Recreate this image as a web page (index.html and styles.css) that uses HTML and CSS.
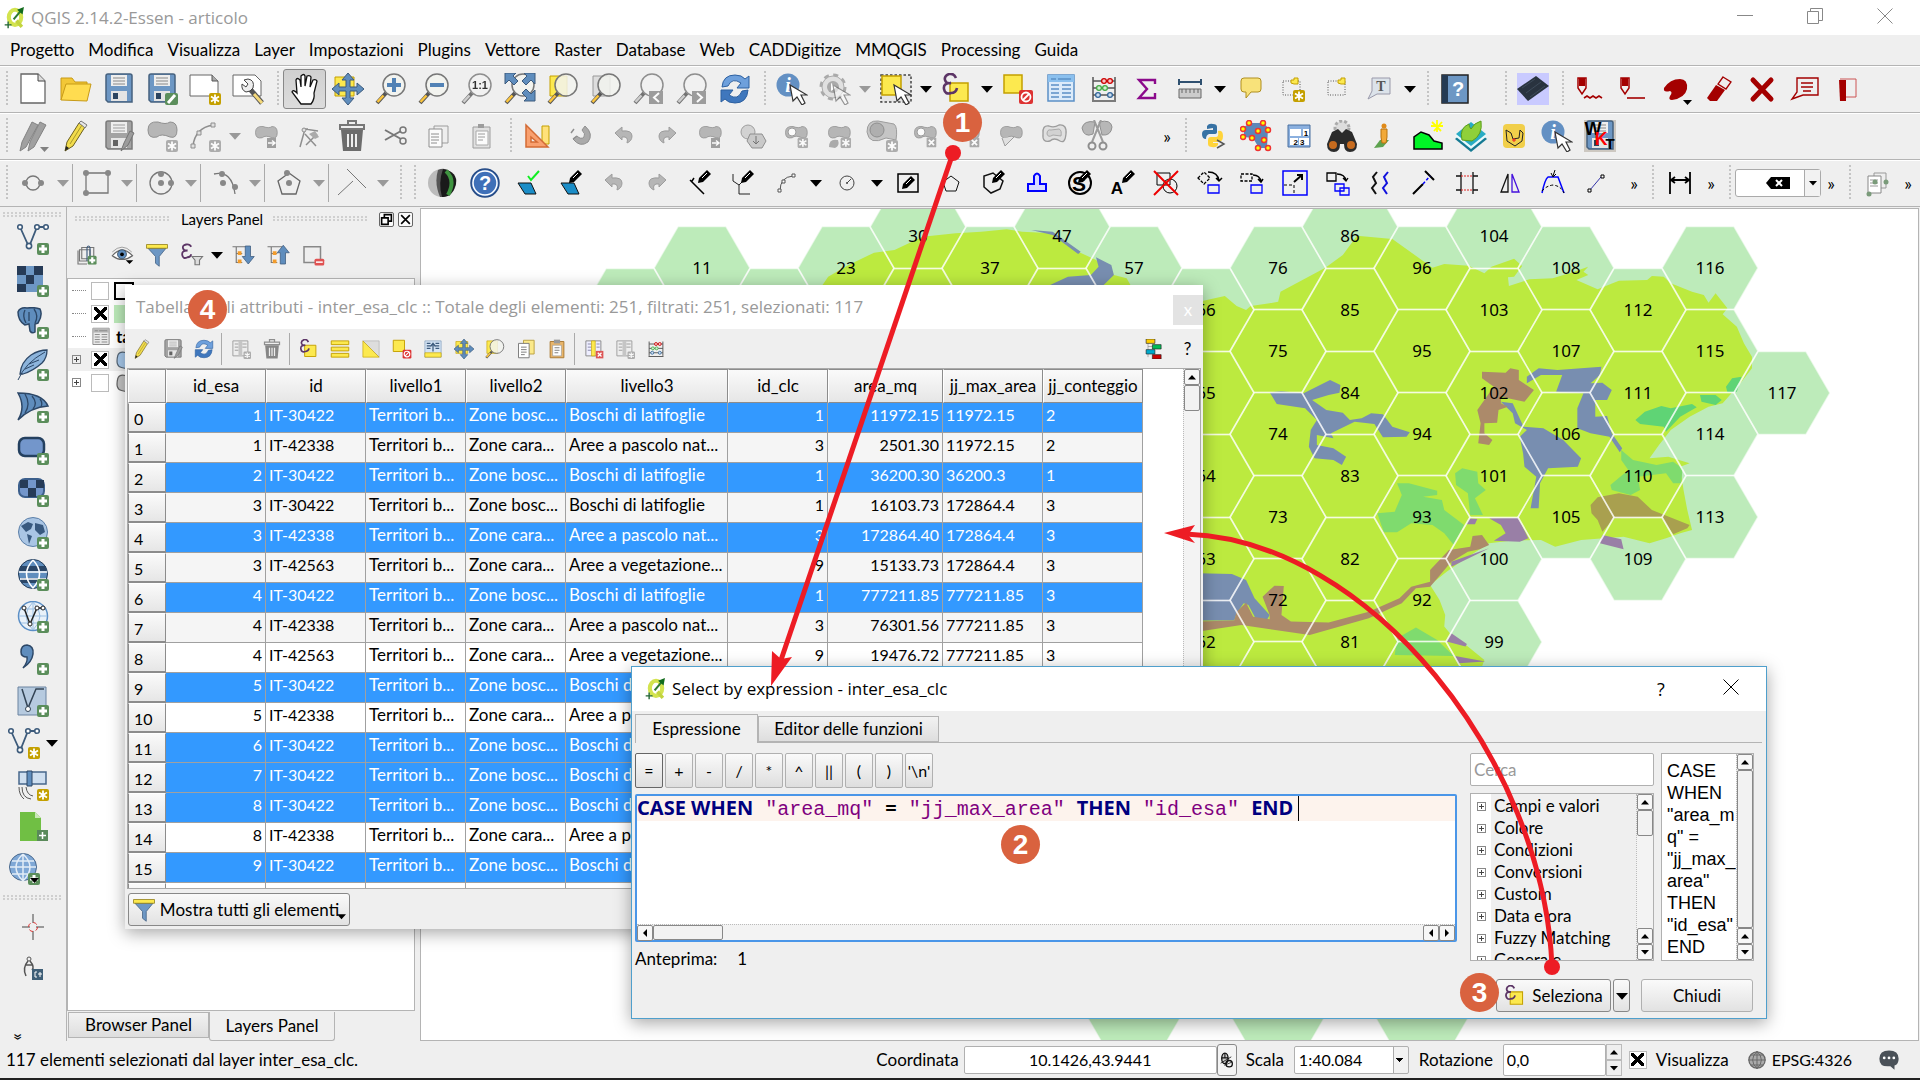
FILE: index.html
```html
<!DOCTYPE html>
<html lang="it">
<head>
  <meta charset="UTF-8" />
  <title>QGIS 2.14.2-Essen - articolo</title>
  <meta name="viewport" content="width=device-width, initial-scale=1" />
  <link rel="stylesheet" href="styles.css">
</head>
<body>

  <svg class="defs" aria-hidden="true">
    <!-- badges and shared parts -->
    <symbol id="b-plus" viewBox="0 0 32 32"><rect x="20" y="20" width="12" height="12" rx="2" fill="#5b8e5b"/><path d="M26 22v8M22 26h8" stroke="#fff" stroke-width="3"/></symbol>
    <symbol id="b-star" viewBox="0 0 32 32"><rect x="20" y="20" width="12" height="12" rx="2" fill="#c4a000"/><path d="M26 21.500v9M22 23.500l8 5M22 28.500l8-5" stroke="#fff" stroke-width="1.800"/></symbol>
    <symbol id="b-del" viewBox="0 0 32 32"><rect x="20" y="20" width="11" height="11" rx="1" fill="#999"/><path d="M22.500 22.500l6 6M28.500 22.500l-6 6" stroke="#fff" stroke-width="2"/></symbol>
    <symbol id="glass" viewBox="0 0 32 32"><path d="M2 30l9-10" stroke="#555" stroke-width="4"/><path d="M2.500 29l6-6.500" stroke="#fbc53d" stroke-width="2.500"/><circle cx="19" cy="12" r="11" fill="#f2f3ee" fill-opacity=".85" stroke="#777" stroke-width="1.500"/></symbol>
    <symbol id="cursor" viewBox="0 0 32 32"><path d="M14 12l3 16 4-4 5 8 3-2-4-8h6z" fill="#fff" stroke="#333" stroke-width="1.200"/></symbol>
    <symbol id="pen-s" viewBox="0 0 32 32"><path d="M14 16l1-5 8-8 4 4-8 8z" fill="#000"/><path d="M18 11l5-5" stroke="#fff" stroke-width="1"/></symbol>
    <symbol id="logo" viewBox="0 0 32 32"><ellipse cx="16" cy="15" rx="9" ry="11" fill="none" stroke="#d3e34f" stroke-width="6"/><path d="M18 20l8 9" stroke="#c3d43f" stroke-width="5"/><path d="M14 18L25 5" stroke="#2c7a2f" stroke-width="3"/><path d="M19 4l10-4-2 11z" fill="#116b1c"/><path d="M1 26h10M6 21v10" stroke="#263" stroke-width="2"/></symbol>

    <!-- project -->
    <symbol id="new" viewBox="0 0 32 32"><path d="M4 1h17l7 7v22H4z" fill="#fff" stroke="#666" stroke-width="1.300"/><path d="M21 1v7h7" fill="#ddd" stroke="#444"/></symbol>
    <symbol id="open" viewBox="0 0 32 32"><path d="M1 27V5h11l3 4h12v4" fill="#f2c737" stroke="#c79a17"/><path d="M1 27l5-16h25l-4 17z" fill="#ffdc50" stroke="#c79a17"/></symbol>
    <symbol id="save" viewBox="0 0 32 32"><path d="M3 3q0-2 2-2h22q2 0 2 2v26h-24l-2-2z" fill="#6d97c4" stroke="#45617f" stroke-width="1.500"/><path d="M8 2h16v11H8z" fill="#eee"/><path d="M10 5h12M10 8h12M10 11h12" stroke="#888"/><path d="M8 18h16v10H8z" fill="#e4e4e4"/><path d="M10 20h5v6h-5z" fill="#2b4460"/></symbol>
    <symbol id="saveas" viewBox="0 0 32 32"><use href="#save"/><rect x="19" y="20" width="13" height="12" rx="2" fill="#5b8e5b"/><path d="M22 30l7-8" stroke="#fff" stroke-width="3"/></symbol>
    <symbol id="compnew" viewBox="0 0 32 32"><path d="M1 2h22l6 6v15H1z" fill="#fff" stroke="#666"/><path d="M23 2v6h6" fill="#aaa" stroke="#555"/><use href="#b-star"/></symbol>
    <symbol id="comp" viewBox="0 0 32 32"><path d="M1 2h22l6 6v15H1z" fill="#fff" stroke="#666"/><path d="M18 16l12 14" stroke="#555" stroke-width="5"/><path d="M22 21l8 9" stroke="#f5d97b" stroke-width="3"/><path d="M12 7l4 4-2 3-4-3q-1 6 4 8l4-1 3-3q2-8-5-9z" fill="#eee" stroke="#444"/></symbol>
    <symbol id="hand" viewBox="0 0 32 32"><path d="M12 31q-6-8-9-12 1-3 5 1L7 7q1-3 4 0l1 7V3q3-3 4 0v10l2-10q3-1 4 1l-1 10 3-7q3-1 4 1l-3 12q1 6-3 11z" fill="#fff" stroke="#111" stroke-width="1.300"/></symbol>
    <symbol id="pan" viewBox="0 0 32 32"><path d="M3 4h19v19H3z" fill="#fce94f" stroke="#c4a000"/><path d="M16 0l6 7h-4v7h7v-4l7 6-7 6v-4h-7v7h4l-6 7-6-7h4v-7H7v4l-7-6 7-6v4h7V7h-4z" fill="#5f8dbd" stroke="#3c5a7c"/></symbol>
    <symbol id="zin" viewBox="0 0 32 32"><use href="#glass"/><path d="M19 5v14M12 12h14" stroke="#5282b5" stroke-width="4"/></symbol>
    <symbol id="zout" viewBox="0 0 32 32"><use href="#glass"/><path d="M12 12h14" stroke="#5282b5" stroke-width="4"/></symbol>
    <symbol id="z11" viewBox="0 0 32 32"><use href="#glass"/><text x="19" y="16" class="ic-b" font-size="11">1:1</text></symbol>
    <symbol id="zfull" viewBox="0 0 32 32"><use href="#glass"/><path d="M1 0h11l-3 3 5 5-4 4-5-5-4 4zM31 0H20l3 3-5 5 4 4 5-5 4 4zM31 28H20l3-3-5-5 4-4 5 5 4-4z" fill="#5f8dbd" stroke="#3c5a7c"/></symbol>
    <symbol id="zsel" viewBox="0 0 32 32"><path d="M3 3h17v20H3z" fill="#fce94f" stroke="#c4a000"/><use href="#glass"/></symbol>
    <symbol id="zlay" viewBox="0 0 32 32"><path d="M3 3h17v20H3z" fill="#ddd" stroke="#999"/><use href="#glass"/></symbol>
    <symbol id="zlast" viewBox="0 0 32 32"><use href="#glass"/><path d="M16 18h14v13H16z" fill="#888"/><path d="M26 20l-5 4.500 5 4.500" fill="none" stroke="#fff" stroke-width="2"/></symbol>
    <symbol id="znext" viewBox="0 0 32 32"><use href="#glass"/><path d="M16 18h14v13H16z" fill="#888"/><path d="M21 20l5 4.500-5 4.500" fill="none" stroke="#fff" stroke-width="2"/></symbol>
    <symbol id="refresh" viewBox="0 0 32 32"><path d="M3 14Q4 2 16 2q7 0 10 4l4-3v12H18l4-5q-9-6-13 3z" fill="#6ea0dc" stroke="#2d60a0"/><path d="M29 17Q28 30 16 30q-7 0-10-4l-4 3V17h12l-4 5q9 6 13-4z" fill="#3f77bd" stroke="#2d60a0"/></symbol>
    <symbol id="info" viewBox="0 0 32 32"><circle cx="12" cy="12" r="11.500" fill="#6390c3"/><text x="12" y="19" class="ic-i" font-size="20">i</text><use href="#cursor"/></symbol>
    <symbol id="gear" viewBox="0 0 32 32"><circle cx="14" cy="14" r="12" fill="none" stroke="#999" stroke-width="3" stroke-dasharray="5 4.400"/><circle cx="14" cy="14" r="11" fill="#ddd" stroke="#999"/><circle cx="14" cy="14" r="6" fill="#999"/><path d="M12 10l6 4-6 4z" fill="#fff"/><use href="#cursor" opacity=".6"/></symbol>
    <symbol id="select" viewBox="0 0 32 32"><path d="M1 2h30v27H1z" fill="#e6e6e6" stroke="#444" stroke-width="1.500" stroke-dasharray="2.500 2"/><path d="M2 3h19v19H2z" fill="#fce94f" stroke="#c4a000" stroke-width="1.500"/><use href="#cursor"/></symbol>
    <symbol id="eps" viewBox="0 0 32 32"><path d="M9 10h18v18H9z" fill="#fce94f" stroke="#c4a000" stroke-width="1.500"/><path d="M15 5Q13 0 8 1 3 3 4 7t6 3q-8 0-7 6t7 4q5 0 6-5" fill="none" stroke="#5c3566" stroke-width="2.600"/></symbol>
    <symbol id="desel" viewBox="0 0 32 32"><path d="M2 2h18v18H2z" fill="#fce94f" stroke="#c4a000" stroke-width="1.500"/><rect x="17" y="17" width="14" height="14" rx="2" fill="#d33"/><circle cx="24" cy="24" r="4.500" fill="none" stroke="#fff" stroke-width="1.800"/><path d="M21 27l6-6" stroke="#fff" stroke-width="1.800"/></symbol>
    <symbol id="table" viewBox="0 0 32 32"><path d="M3 2h26v26H3z" fill="#dcebfa" stroke="#5b90c6" stroke-width="1.500"/><path d="M3 2h26v7H3z" fill="#8bc0ee"/><path d="M6 6h5M13 6h13M6 12h8M17 12h9M6 16h8M17 16h9M6 20h8M17 20h9M6 24h8M17 24h9" stroke="#5b90c6" stroke-width="1.500"/></symbol>
    <symbol id="abacus" viewBox="0 0 32 32"><path d="M5 4v23M27 4v23M4 28h24M5 8h22M5 15h22M5 22h22" stroke="#555" stroke-width="1.500"/><g stroke-width="1.300"><g fill="#f9c7c7" stroke="#c00"><circle cx="16" cy="8" r="2.400"/><circle cx="22" cy="8" r="2.400"/></g><g fill="#cfefcf" stroke="#4a4"><circle cx="11" cy="15" r="2.400"/><circle cx="17" cy="15" r="2.400"/></g><g fill="#cde" stroke="#369"><circle cx="10" cy="22" r="2.400"/><circle cx="22" cy="22" r="2.400"/></g></g></symbol>
    <symbol id="sigma" viewBox="0 0 32 32"><path d="M24 11V7H8l8 9-8 9h16v-5" fill="none" stroke="#8b0a8b" stroke-width="2.400"/></symbol>
    <symbol id="ruler" viewBox="0 0 32 32"><path d="M5 9h22M5 6v6M27 6v6" stroke="#2f5070" stroke-width="2"/><path d="M5 16h22v9H5z" fill="#ccc" stroke="#666"/><path d="M8 16v4M12 16v4M16 16v4M20 16v4M24 16v4" stroke="#666"/></symbol>
    <symbol id="bubble" viewBox="0 0 32 32"><path d="M9 5h14q3 0 3 3v8q0 3-3 3h-7l-5 6v-6H9q-3 0-3-3V8q0-3 3-3z" fill="#f8e27a" stroke="#b08f1f"/></symbol>
    <symbol id="bmark" viewBox="0 0 32 32"><path d="M7 8h17v14H7z" fill="none" stroke="#555" stroke-dasharray="1 1.500"/><path d="M17 10V7h3V5h4v6h-4z" fill="#fce94f" stroke="#c4a000"/></symbol>
    <symbol id="bmnew" viewBox="0 0 32 32"><path d="M5 8h17v14H5z" fill="none" stroke="#555" stroke-dasharray="1 1.500"/><path d="M13 10V7h3V5h4v6h-4z" fill="#fce94f" stroke="#c4a000"/><g transform="translate(-5 -3)"><use href="#b-star"/></g></symbol>
    <symbol id="tnote" viewBox="0 0 32 32"><path d="M8 5h18v16H13l-9 5 4-8z" fill="#dce3ea" stroke="#99a"/><text x="17" y="18" class="ic-t" font-size="14">T</text></symbol>
    <symbol id="book" viewBox="0 0 32 32"><path d="M3 2h26v28H3z" fill="#6d97c4" stroke="#222" stroke-width="1.500"/><path d="M3 2h6v28H3z" fill="#253a52"/><text x="19" y="23" font-size="20" class="ic-w">?</text></symbol>
    <symbol id="chip" viewBox="0 0 32 32"><path d="M0 0h32v32H0z" fill="#c9caff"/><path d="M0 16L19 3l13 10-21 15z" fill="#29333f"/><path d="M5 15l13-9M9 20l15-11M13 24l15-11" stroke="#3e4b5a"/></symbol>
    <symbol id="rpen1" viewBox="0 0 32 32"><path d="M4 5h8v10l-4 6-4-6z" fill="none" stroke="#a40000" stroke-width="1.500"/><path d="M5 5h6v8H5z" fill="#a40000"/><path d="M10 25l3-2 3 2 3-2 3 2 3-2 3 2" fill="none" stroke="#a40000" stroke-width="1.600"/></symbol>
    <symbol id="rpen2" viewBox="0 0 32 32"><path d="M4 5h8v10l-4 6-4-6z" fill="none" stroke="#a40000" stroke-width="1.500"/><path d="M5 5h6v8H5z" fill="#a40000"/><path d="M10 25h18" stroke="#a40000" stroke-width="1.600"/></symbol>
    <symbol id="palette" viewBox="0 0 32 32"><path d="M4 15Q10 6 20 6q8 0 7 10-2 9-15 11-4 0-2-4 3-4 0-5-7 2-6-3z" fill="#a40000"/><path d="M23 27h9l-4.500 5z"/></symbol>
    <symbol id="eraser" viewBox="0 0 32 32"><path d="M20 4l8 5-5 7-8-5z" fill="none" stroke="#a40000" stroke-width="1.300"/><path d="M13 12l9 5-8 11H7l-3-3z" fill="#a40000"/></symbol>
    <symbol id="rx" viewBox="0 0 32 32"><path d="M7 7l18 19M25 7L7 26" stroke="#a40000" stroke-width="5" stroke-linecap="round"/></symbol>
    <symbol id="rnote" viewBox="0 0 32 32"><path d="M8 5h21v17H14L3 26l5-7zM12 10h12M12 14h12M14 18h8" fill="none" stroke="#a40000" stroke-width="1.400"/></symbol>
    <symbol id="rdoc" viewBox="0 0 32 32"><path d="M8 6h16v18H14" fill="none" stroke="#c55"/><path d="M7 7h7v21H8z" fill="#a40000"/></symbol>

    <!-- digitizing -->
    <symbol id="pencil" viewBox="0 0 32 32"><path d="M5 31l2-9L19 3l6 4-12 19z" fill="#f2dc4c" stroke="#6b5f20"/><path d="M19 3l2-2 6 4-2 3z" fill="#e6e6e6" stroke="#777"/><path d="M5 31l1-5 3 2z" fill="#222"/><path d="M10 24L22 5" stroke="#a8982d"/></symbol>
    <symbol id="pencils" viewBox="0 0 32 32"><path d="M3 31l2-9L15 2l6 3-12 22zM11 31l2-9L23 2l6 3-12 22z" fill="#8d8d8d" stroke="#666"/><path d="M23 27h9l-4.500 5z" fill="#666"/></symbol>
    <symbol id="savep" viewBox="0 0 32 32"><use href="#save"/><path d="M18 31l3-8 6-12 4 2-6 12z" fill="#888" stroke="#555"/></symbol>
    <symbol id="blob" viewBox="0 0 32 32"><path d="M2 10q0-9 10-8 8 3 12 0 7 0 7 8 0 9-7 7-9-4-13 0-9 2-9-7z" fill="#a9a9a9" stroke="#777"/></symbol>
    <symbol id="addpoly" viewBox="0 0 32 32"><use href="#blob"/><use href="#b-star"/></symbol>
    <symbol id="addcurve" viewBox="0 0 32 32"><path d="M4 26Q6 8 24 5" fill="none" stroke="#777" stroke-width="1.500"/><path d="M2 24h4v4H2zM8 11h4v4H8zM22 3h4v4h-4z" fill="#ddd" stroke="#777"/><use href="#b-star"/></symbol>
    <symbol id="part" viewBox="0 0 32 32"><g transform="translate(4 5) scale(.75)"><use href="#blob" width="32" height="32"/></g><path d="M6 27q0-9 9-7 2 6-3 8z" fill="#999"/><g transform="translate(0 0) scale(.88)"><use href="#b-star" width="32" height="32"/></g></symbol>
    <symbol id="ring" viewBox="0 0 32 32"><g transform="translate(4 5) scale(.75)"><use href="#blob" width="32" height="32"/></g><circle cx="12" cy="12" r="4" fill="#fff" stroke="#888"/><g transform="translate(0 0) scale(.88)"><use href="#b-star" width="32" height="32"/></g></symbol>
    <symbol id="ringdel" viewBox="0 0 32 32"><g transform="translate(4 5) scale(.75)"><use href="#blob" width="32" height="32"/></g><circle cx="12" cy="12" r="4" fill="#fff" stroke="#888"/><g transform="translate(0 0) scale(.88)"><use href="#b-del" width="32" height="32"/></g></symbol>
    <symbol id="fillring" viewBox="0 0 32 32"><path d="M1 12Q1 0 12 1l16 3q4 3 2 16l-10-2Q3 26 1 12z" fill="#bbb" stroke="#888"/><circle cx="11" cy="10" r="7" fill="#a0a0a0" stroke="#777"/><use href="#b-star"/></symbol>
    <symbol id="movef" viewBox="0 0 32 32"><g transform="translate(4 5) scale(.75)"><use href="#blob" width="32" height="32"/></g><path d="M17 18h9v10h-9z" fill="#8a8a8a"/><path d="M18 23h6M22 20.500l3 2.500-3 2.500" fill="none" stroke="#fff" stroke-width="1.500"/></symbol>
    <symbol id="simpl" viewBox="0 0 32 32"><circle cx="11" cy="12" r="7" fill="#ccc" stroke="#888"/><path d="M13 14h12l4 7-4 7H15l-5-7z" fill="#c0c0c0" stroke="#777"/><path d="M19 16v8l-3-3M19 24l3-3" fill="none" stroke="#555"/></symbol>
    <symbol id="reshape" viewBox="0 0 32 32"><g transform="translate(4 5) scale(.75)"><use href="#blob" width="32" height="32"/></g><path d="M7 18l3 8 9-9" fill="#ddd" stroke="#888"/></symbol>
    <symbol id="offset" viewBox="0 0 32 32"><path d="M5 14q-1-9 6-8 5 2 10-1 8-1 7 9-1 10-6 7-6-4-10 0-8 2-7-7z" fill="#ddd" stroke="#888" stroke-width="1.300"/><path d="M9 14q0-5 4-4l8-1q3 1 2 7l-8-1q-5 3-6-1z" fill="#ccc" stroke="#999"/></symbol>
    <symbol id="split" viewBox="0 0 32 32"><path d="M1 8q2-8 13-6l-2 12Q3 18 1 8zM18 2q12-3 13 5-1 9-10 8z" fill="#aaa" stroke="#777"/><path d="M11 22l9-22M22 22L13 0" stroke="#888" stroke-width="2"/><circle cx="11" cy="26" r="3.500" fill="none" stroke="#777" stroke-width="2"/><circle cx="22" cy="26" r="3.500" fill="none" stroke="#777" stroke-width="2"/></symbol>
    <symbol id="node" viewBox="0 0 32 32"><path d="M7 27l5-18 13 2M10 9h5M12 14l11 12M24 14L13 25" fill="none" stroke="#777" stroke-width="1.500"/><circle cx="11" cy="10" r="2" fill="#ddd" stroke="#777"/><path d="M16 14l6-3 4 6-4 2z" fill="#999"/></symbol>
    <symbol id="trash" viewBox="0 0 32 32"><path d="M5 10h22l-2 21H7z" fill="#6c6c6c"/><path d="M4 5h24v4H4zM12 5V1h8v4" fill="none" stroke="#777" stroke-width="2"/><path d="M12 14v13M16 14v13M20 14v13" stroke="#eee" stroke-width="2"/></symbol>
    <symbol id="cut" viewBox="0 0 32 32"><path d="M6 10l16 9M6 20l16-9" stroke="#777" stroke-width="2"/><circle cx="24" cy="21" r="3" fill="none" stroke="#777" stroke-width="1.500"/><circle cx="24" cy="10" r="3" fill="none" stroke="#777" stroke-width="1.500"/></symbol>
    <symbol id="copy" viewBox="0 0 32 32"><path d="M12 6h14v17H12z" fill="#eee" stroke="#888"/><path d="M7 9h13v18H7z" fill="#fff" stroke="#777"/><path d="M9 14h8M9 17h8M9 20h8M9 23h6" stroke="#777"/></symbol>
    <symbol id="paste" viewBox="0 0 32 32"><path d="M8 7h17v21H8z" fill="#ddd" stroke="#888"/><path d="M13 4h6v4h-6z" fill="#888"/><path d="M11 11h12v14H11z" fill="#fff" stroke="#999"/><path d="M13 14h7M13 17h7M13 20h5" stroke="#888"/></symbol>
    <symbol id="tri" viewBox="0 0 32 32"><path d="M20 6h7v18h-7z" fill="#ffe27a" stroke="#c4a000"/><path d="M4 5v22h22zM9 17v5h6z" fill="#f9a06f" fill-rule="evenodd" stroke="#d36b35" stroke-width="1.500"/></symbol>
    <symbol id="magnet" viewBox="0 0 32 32"><path d="M20 6q9 8 3 16-8 6-15-3l4-3q4 4 7 1 2-3-2-7z" fill="#999" stroke="#777"/><path d="M6 13l3-4M8 19l4-3" stroke="#777" stroke-width="1.500"/></symbol>
    <symbol id="undo" viewBox="0 0 32 32"><path d="M7 13l7-6v4q10-1 10 5 0 5-5 7 2-7-5-6v3z" fill="#a8a8a8" stroke="#888"/></symbol>
    <symbol id="redo" viewBox="0 0 32 32"><path d="M25 13l-7-6v4q-10-1-10 5 0 5 5 7-2-7 5-6v3z" fill="#a8a8a8" stroke="#888"/></symbol>

    <!-- plugins -->
    <symbol id="python" viewBox="0 0 32 32"><path d="M10 9V6q2-3 6-2 4 0 4 3v5q0 2-3 2h-5q-3 1-3 5-4 0-4-5 0-4 4-4h7V8z" fill="#3772a4"/><path d="M21 11q5-1 5 5t-5 6h-5v1h5v2q-2 3-6 2-4 0-4-3v-4q0-3 3-3h5q3 0 2-6z" fill="#ffd43b"/><path d="M20 20l7 4-7 4" fill="none" stroke="#555" stroke-width="1.500"/></symbol>
    <symbol id="nodes" viewBox="0 0 32 32"><path d="M4 7l6-4h14l4 5-1 20H19l-6-10-9-1z" fill="#5b87b8"/><g fill="#ff0" stroke="#e33" stroke-width="1.500"><circle cx="9" cy="3" r="2.500"/><circle cx="23" cy="3" r="2.500"/><circle cx="3" cy="9" r="2.500"/><circle cx="28" cy="10" r="2.500"/><circle cx="18" cy="11" r="2.500"/><circle cx="3" cy="17" r="2.500"/><circle cx="12" cy="18" r="2.500"/><circle cx="24" cy="20" r="2.500"/><circle cx="18" cy="28" r="2.500"/><circle cx="28" cy="28" r="2.500"/></g></symbol>
    <symbol id="calc" viewBox="0 0 32 32"><path d="M5 5h22v22H5z" fill="#8bb0df" stroke="#4a70a0"/><path d="M7 9h11v7H7zM20 9h6v7h-6zM7 18h8v7H7zM16 18h10v7H16z" fill="#fff"/><text x="23" y="16" class="ic-b" font-size="8">1</text><text x="16" y="25" class="ic-b" font-size="8">2 3</text></symbol>
    <symbol id="bino" viewBox="0 0 32 32"><circle cx="16" cy="8" r="7" fill="#ddd" stroke="#aaa" stroke-width="3" stroke-dasharray="3 2"/><path d="M6 12l6-3 4 4 4-4 6 3 5 12q0 8-7 8-6 0-6-8h-4q0 8-6 8-7 0-7-8z" fill="#2b2b2b"/><circle cx="7" cy="25" r="4" fill="#c76b1e"/><circle cx="25" cy="25" r="4" fill="#c76b1e"/></symbol>
    <symbol id="street" viewBox="0 0 32 32"><path d="M5 28l6-8h9l-6 7z" fill="#5da24e"/><circle cx="15" cy="6" r="2.500" fill="#e08a18"/><path d="M12 9h6v8l-1 6h-4l-1-6z" fill="#f2a93a" stroke="#b9720f"/></symbol>
    <symbol id="profile" viewBox="0 0 32 32"><path d="M2 29V17l7-5 8 3 5 6 8 2v6z" fill="#00f526" stroke="#000" stroke-width="1.500"/><path d="M20 2l9 9M30 2l-8 9M25 0v12M19 6h12" stroke="#ff0" stroke-width="1.800"/></symbol>
    <symbol id="leaf" viewBox="0 0 32 32"><path d="M0 19L16 6l16 13-16 13z" fill="#157a93"/><path d="M0 16L16 3l16 13-16 13z" fill="#e9fafc"/><path d="M1 14L16 2l15 12-15 12z" fill="#28acc4"/><path d="M7 20Q4 8 14 4q0 3 2 5 3-6 10-8 2 14-9 20z" fill="#8fd039" stroke="#5b9e1c"/></symbol>
    <symbol id="fox" viewBox="0 0 32 32"><rect x="5" y="4" width="22" height="24" rx="4" fill="#f1cf4a"/><path d="M8 10l5 3 2 6 6-1 1-8 3 3-1 8-7 5-8-5z" fill="none" stroke="#222"/><path d="M16 18v4M14 20h4" stroke="#e22"/></symbol>
    <symbol id="wkt" viewBox="0 0 32 32"><path d="M0 0h32v32H0z" fill="#cdc8c1"/><use href="#save"/><text x="9" y="15" class="ic-b" font-size="18">W</text><text x="17" y="25" class="ic-b" font-size="18" fill="#f00">K</text><text x="26" y="29" class="ic-b" font-size="15">T</text></symbol>

    <!-- CAD -->
    <symbol id="sh1" viewBox="0 0 32 32"><circle cx="16" cy="16" r="7" fill="none" stroke="#777" stroke-width="1.300"/><circle cx="8" cy="16" r="3" fill="#888"/><circle cx="24" cy="16" r="3" fill="#888"/></symbol>
    <symbol id="sh2" viewBox="0 0 32 32"><path d="M5 6h22v20H5z" fill="none" stroke="#777" stroke-width="1.300"/><circle cx="5" cy="6" r="3" fill="#888"/><circle cx="27" cy="6" r="3" fill="#888"/><circle cx="5" cy="26" r="3" fill="#888"/></symbol>
    <symbol id="sh3" viewBox="0 0 32 32"><circle cx="16" cy="16" r="11" fill="none" stroke="#777" stroke-width="1.300"/><circle cx="16" cy="7" r="3" fill="#888"/><circle cx="16" cy="16" r="3" fill="#888"/><circle cx="26" cy="16" r="3" fill="#888"/></symbol>
    <symbol id="sh4" viewBox="0 0 32 32"><path d="M5 7q18-4 21 20" fill="none" stroke="#777" stroke-width="1.300"/><circle cx="13" cy="7" r="3" fill="#888"/><circle cx="14" cy="16" r="3" fill="#888"/><circle cx="26" cy="20" r="3" fill="#888"/></symbol>
    <symbol id="sh5" viewBox="0 0 32 32"><path d="M16 6l11 8-4 13H9L5 14z" fill="none" stroke="#666" stroke-width="1.300"/><circle cx="14" cy="6" r="3" fill="#888"/><circle cx="16" cy="16" r="3" fill="#888"/></symbol>
    <symbol id="sh6" viewBox="0 0 32 32"><path d="M10 2l19 19M16 14L1 28" fill="none" stroke="#777"/></symbol>
    <symbol id="globe" viewBox="0 0 32 32"><circle cx="16" cy="16" r="14" fill="#bbb"/><path d="M12 3q12-5 18 12-2 16-16 15-6-14-2-27z" fill="#555"/><path d="M17 2q15 3 13 15-4 14-14 13-4-14 1-28z" fill="#1a1a1a"/><path d="M20 4q10 9 2 24" fill="none" stroke="#3f9440" stroke-width="4"/></symbol>
    <symbol id="help" viewBox="0 0 32 32"><circle cx="16" cy="16" r="14" fill="#3f70b8" stroke="#274c86" stroke-width="1.500"/><circle cx="16" cy="16" r="12" fill="none" stroke="#fff" stroke-width="1.500"/><text x="16" y="23" class="ic-w" font-size="20">?</text></symbol>
    <symbol id="bcheck" viewBox="0 0 32 32"><path d="M6 16h13l5 11H13z" fill="#1b8dc7" stroke="#111"/><path d="M16 9l3 4 8-9" fill="none" stroke="#1e2" stroke-width="2"/></symbol>
    <symbol id="bpen" viewBox="0 0 32 32"><path d="M6 16h13l5 11H13z" fill="#1b8dc7" stroke="#111"/><use href="#pen-s"/></symbol>
    <symbol id="c1" viewBox="0 0 32 32"><path d="M6 13l14 14M8 14l2-3" stroke="#000" stroke-width="1.500"/><use href="#pen-s"/></symbol>
    <symbol id="c2" viewBox="0 0 32 32"><path d="M6 7v7l6 4v9h11M12 18l6-6" fill="none" stroke="#222"/><use href="#pen-s"/></symbol>
    <symbol id="arc" viewBox="0 0 32 32"><path d="M10 24q0-14 13-15" fill="none" stroke="#555"/><path d="M8 22h3v3H8zM12 13h3v3h-3zM22 7h3v3h-3z" fill="#fff" stroke="#555"/></symbol>
    <symbol id="circ" viewBox="0 0 32 32"><circle cx="16" cy="16" r="7" fill="none" stroke="#444"/><path d="M16 16l4-4" stroke="#444"/><circle cx="16" cy="16" r="1" fill="#444"/></symbol>
    <symbol id="boxpen" viewBox="0 0 32 32"><path d="M6 7h20v18H6z" fill="none" stroke="#000" stroke-width="1.500"/><g transform="translate(-4 6)"><use href="#pen-s"/></g></symbol>
    <symbol id="pent" viewBox="0 0 32 32"><path d="M16 9l8 6-3 9H11l-3-9z" fill="none" stroke="#111"/></symbol>
    <symbol id="polypen" viewBox="0 0 32 32"><path d="M15 6l10 8-3 8-9 4-7-6V9z" fill="none" stroke="#111" stroke-width="1.500"/><use href="#pen-s"/></symbol>
    <symbol id="stamp" viewBox="0 0 32 32"><path d="M13 17V9q3-5 6 0v8h6v7H7v-7z" fill="#d9dcff" stroke="#00f" stroke-width="2"/></symbol>
    <symbol id="cs" viewBox="0 0 32 32"><circle cx="16" cy="16" r="11" fill="none" stroke="#000" stroke-width="2"/><text x="15" y="24" class="ic-b" font-size="21">S</text><use href="#pen-s"/></symbol>
    <symbol id="ca" viewBox="0 0 32 32"><text x="10" y="27" class="ic-b" font-size="17">A</text><g transform="translate(1 0)"><use href="#pen-s"/></g></symbol>
    <symbol id="delx" viewBox="0 0 32 32"><path d="M7 6h13v12H7z" fill="none" stroke="#000"/><circle cx="20" cy="19" r="7" fill="none" stroke="#000"/><path d="M4 4l24 24M28 4L4 28" stroke="#e00" stroke-width="2"/></symbol>
    <symbol id="rot2" viewBox="0 0 32 32"><path d="M5 11l6-6 6 6-6 6z" fill="none" stroke="#000" stroke-width="1.300" stroke-dasharray="3 1.500"/><path d="M15 5q10 0 11 9m-3-3l3 3 3-3" fill="none" stroke="#000" stroke-width="1.500"/><path d="M15 18h11v8H15z" fill="none" stroke="#00f" stroke-width="1.300"/></symbol>
    <symbol id="mov2" viewBox="0 0 32 32"><path d="M5 7h11v7H5z" fill="none" stroke="#000" stroke-width="1.300" stroke-dasharray="3 1.500"/><path d="M17 8q7 0 8 7m-3-3l3 3 2-3" fill="none" stroke="#000" stroke-width="1.500"/><path d="M15 18h11v8H15z" fill="none" stroke="#00f" stroke-width="1.300"/></symbol>
    <symbol id="scale" viewBox="0 0 32 32"><path d="M4 4h24v24H4z" fill="none" stroke="#00f" stroke-width="1.500"/><path d="M5 18h10v9" fill="none" stroke="#000" stroke-dasharray="3 2"/><path d="M15 15l8-7m-5 0h5v5" fill="none" stroke="#000" stroke-width="2"/></symbol>
    <symbol id="copy2" viewBox="0 0 32 32"><path d="M5 6h9v8H5z" fill="none" stroke="#000" stroke-width="1.300"/><path d="M15 7q8 0 9 7m-3-3l3 3 2-3" fill="none" stroke="#000" stroke-width="1.300"/><path d="M13 17h9v7h-9zM18 21h9v7h-9z" fill="#efefef" stroke="#00f" stroke-width="1.300"/></symbol>
    <symbol id="par" viewBox="0 0 32 32"><path d="M12 5l-4 5 3 6-4 5 4 6" fill="none" stroke="#111" stroke-width="2"/><path d="M23 5l-4 5 3 6-4 5 4 6" fill="none" stroke="#11d" stroke-width="2"/></symbol>
    <symbol id="perp" viewBox="0 0 32 32"><path d="M5 27l10-10M17 4l9 9" stroke="#000" stroke-width="2"/><path d="M15 17l7-8" stroke="#00f" stroke-width="1.500" stroke-dasharray="3 2"/></symbol>
    <symbol id="grid" viewBox="0 0 32 32"><path d="M10 5v22M22 5v22M5 9h5M22 9h5M5 23h5M22 23h5" stroke="#111" stroke-width="1.300"/><path d="M10 9h12M10 23h12" stroke="#d22" stroke-dasharray="2 1"/></symbol>
    <symbol id="mirror" viewBox="0 0 32 32"><path d="M14 7v18H7z" fill="none" stroke="#111" stroke-width="1.300"/><path d="M18 7v18h7z" fill="none" stroke="#41d" stroke-width="1.300"/></symbol>
    <symbol id="trap" viewBox="0 0 32 32"><path d="M5 26q3-14 6-16h10l6 16" fill="none" stroke="#00f" stroke-width="1.500"/><path d="M5 24q4-5 11-6 8 1 11 8" fill="none" stroke="#000" stroke-dasharray="3 2"/><path d="M18 3l-2 6m-2-3l2 4 3-3" fill="none" stroke="#000"/></symbol>
    <symbol id="seg" viewBox="0 0 32 32"><path d="M10 23L21 10" stroke="#33a"/><path d="M8 22h3v3H8zM21 8h3v3h-3z" fill="#fff" stroke="#000"/></symbol>
    <symbol id="dim" viewBox="0 0 32 32"><path d="M6 5v22M26 5v22M7 13h18M11 10l-4 3 4 3M21 10l4 3-4 3" fill="none" stroke="#000" stroke-width="1.800"/></symbol>
    <symbol id="docs" viewBox="0 0 32 32"><path d="M13 6h12v15H13z" fill="#eee" stroke="#999"/><path d="M7 9h13v17H7z" fill="#fff" stroke="#888"/><path d="M9 13h8M9 16h8M9 19h8" stroke="#999"/><g fill="#7a9b7a"><circle cx="14" cy="15" r="2.500"/><circle cx="25" cy="15" r="2.500"/><circle cx="8" cy="27" r="2.500"/></g></symbol>

    <!-- add layer -->
    <symbol id="vecline" viewBox="0 0 32 32"><path d="M3 4l9 20 8-20h9" fill="none" stroke="#3d5b7b" stroke-width="1.800"/><g fill="#fff" stroke="#3d5b7b" stroke-width="1.600"><circle cx="3" cy="4" r="2.300"/><circle cx="12" cy="23" r="2.600"/><circle cx="20" cy="4" r="2.300"/><circle cx="29" cy="4" r="2.300"/></g></symbol>
    <symbol id="vec" viewBox="0 0 32 32"><use href="#vecline"/><use href="#b-plus"/></symbol>
    <symbol id="newvec" viewBox="0 0 32 32"><use href="#vecline"/><use href="#b-star"/></symbol>
    <symbol id="raster" viewBox="0 0 32 32"><path d="M0 1h26v26H0z" fill="#6d97c4"/><path d="M0 1h9v9H0zM17 1h9v9h-9zM9 10h8v9H9zM0 19h9v8H0z" fill="#263b57"/><use href="#b-plus"/></symbol>
    <symbol id="pg" viewBox="0 0 32 32"><path d="M1 5Q3 0 10 1q8-1 13 1 3 6-2 14l-3 1v8q-3 2-5-1l-1-7-4 1Q1 14 1 5z" fill="#5f8dbd" stroke="#2c4767" stroke-width="1.500"/><path d="M8 3q-3 6 1 13M17 2q5 7 1 14M12 5v9" fill="none" stroke="#2c4767" stroke-width="1.300"/><use href="#b-plus"/></symbol>
    <symbol id="feather" viewBox="0 0 32 32"><path d="M3 25Q4 13 14 6q8-5 16-5 0 8-5 13Q16 22 6 25z" fill="#8cb4dc" stroke="#2c4767" stroke-width="1.300"/><path d="M1 31Q8 14 28 3M8 20l9-4M12 15l10-4" fill="none" stroke="#2c4767"/><use href="#b-plus"/></symbol>
    <symbol id="sail" viewBox="0 0 32 32"><path d="M1 2q24 0 30 13Q14 16 1 29q8-13 0-27z" fill="#5f8dbd" stroke="#2c4767" stroke-width="1.500"/><path d="M8 3q6 10 0 19M15 5q6 7 1 13M23 8q3 4 1 8" fill="none" stroke="#2c4767" stroke-width="1.300"/><use href="#b-plus"/></symbol>
    <symbol id="db1" viewBox="0 0 32 32"><rect x="2" y="5" width="25" height="18" rx="6" fill="#7396cb" stroke="#24405f" stroke-width="2.500"/><use href="#b-plus"/></symbol>
    <symbol id="db2" viewBox="0 0 32 32"><rect x="2" y="4" width="25" height="18" rx="6" fill="#7396cb" stroke="#3c5f8c" stroke-width="2"/><path d="M3 5h8v8H3zM19 5h8v8h-8zM11 13h8v9h-8z" fill="#263b57"/><use href="#b-plus"/></symbol>
    <symbol id="wms" viewBox="0 0 32 32"><circle cx="16" cy="15" r="14.500" fill="#a9c5e4" stroke="#5b7fa8"/><path d="M4 9l7-4 5 2-2 5-5 3zM18 6l8 2 2 7-5 3-5-5zM10 17l5 2-3 8z" fill="#38597f"/><use href="#b-plus"/></symbol>
    <symbol id="wcs" viewBox="0 0 32 32"><circle cx="16" cy="15" r="14.500" fill="#5f8dbd" stroke="#203a58"/><path d="M3 7h26v5H3zM4 19h24v5H4z" fill="#2b4768"/><path d="M16 1q-13 14 0 28 13-14 0-28M2 13h28M3 20h26" fill="none" stroke="#fff" stroke-width="1.500"/><use href="#b-plus"/></symbol>
    <symbol id="wfs" viewBox="0 0 32 32"><circle cx="16" cy="15" r="14.500" fill="#e9f1f9" stroke="#5b8fc6" stroke-width="1.500"/><path d="M16 1v28M2 15h28M4 8h24M4 22h24M16 1q-14 14 0 28 14-14 0-28" fill="none" stroke="#9bbfe2"/><path d="M7 7l6 16 7-16h5" fill="none" stroke="#222" stroke-width="1.500"/><g fill="#fff" stroke="#222"><circle cx="7" cy="7" r="2"/><circle cx="13" cy="23" r="2"/><circle cx="20" cy="7" r="2"/><circle cx="26" cy="7" r="2"/></g><use href="#b-plus"/></symbol>
    <symbol id="comma" viewBox="0 0 32 32"><path d="M4 9q0-7 6-7 7 1 6 9Q15 19 6 25q5-6 4-11-6 0-6-5z" fill="#5f8dbd" stroke="#2c4767" stroke-width="1.500"/><use href="#b-plus"/></symbol>
    <symbol id="virt" viewBox="0 0 32 32"><path d="M1 2h28v28H1z" fill="#b6cadf" stroke="#6a83a0"/><path d="M5 4l6 19 8-19h8" fill="none" stroke="#345" stroke-width="1.500"/><circle cx="11" cy="24" r="2.500" fill="#fff" stroke="#345"/><use href="#b-plus"/></symbol>
    <symbol id="gps" viewBox="0 0 32 32"><path d="M2 3h27v12H2z" fill="#cfdff0" stroke="#48688c" stroke-width="1.500"/><path d="M10 2h5v15h-5z" fill="#5f8dbd" stroke="#2c4767"/><path d="M9 18q1 8 7 9M5 18q0 11 9 12M2 18q0 8 5 12" fill="none" stroke="#555"/><use href="#b-star"/></symbol>
    <symbol id="green" viewBox="0 0 32 32"><path d="M3 1h15l6 6v23H3z" fill="#70bf44"/><path d="M18 1v6h6z" fill="#c9e8b7"/><path d="M20 19h11v11H20z" fill="#5a8a5b"/><path d="M25.500 21v7M22 24.500h7" stroke="#fff" stroke-width="1.500"/></symbol>
    <symbol id="gl2" viewBox="0 0 32 32"><circle cx="15" cy="14" r="13.500" fill="#7fa8d6" stroke="#49688c"/><path d="M15 1v27M2 14h26M4 8h22M4 21h22M15 1q-14 13 0 27 14-14 0-27" fill="none" stroke="#e3edf7" stroke-width="1.500"/><use href="#b-plus"/><path d="M22 25h9l-4.500 5z"/></symbol>
    <symbol id="cross" viewBox="0 0 32 32"><path d="M16 3v9M16 20v9M5 16h8M19 16h8" stroke="#444"/><circle cx="16" cy="16" r="4.500" fill="none" stroke="#d33" stroke-dasharray="4 3"/></symbol>
    <symbol id="compass" viewBox="0 0 32 32"><circle cx="12" cy="6" r="2" fill="none" stroke="#555"/><path d="M11 8Q5 15 9 23M13 8q5 6 2 9M8 12h8" fill="none" stroke="#555" stroke-width="1.500"/><path d="M15 16h11v11H15z" fill="#3f5f77"/><path d="M20 19h-2v5h2M25 21h-4m2-2v5" stroke="#fff" fill="none"/></symbol>

    <!-- layers panel -->
    <symbol id="grp" viewBox="0 0 32 32"><path d="M4 10v18h12M9 6h16v15H9zM6 9h14v15H6z" fill="#eee" stroke="#777" stroke-width="1.500"/><path d="M16 24V6q2-4 4 0v12" fill="none" stroke="#3c5a7c" stroke-width="1.500"/><g transform="translate(-3 -3)"><use href="#b-plus"/></g></symbol>
    <symbol id="eye" viewBox="0 0 32 32"><path d="M3 17Q16 2 30 17 16 27 3 17z" fill="#fff" stroke="#666" stroke-width="1.500"/><circle cx="16" cy="15" r="6" fill="#5f8dbd" stroke="#345"/><circle cx="16" cy="15" r="2.500"/><path d="M3 12Q16-1 29 12" fill="none" stroke="#888"/><path d="M21 23h10l-5 5z"/></symbol>
    <symbol id="filter" viewBox="0 0 32 32"><path d="M4 7h24l-9 11v13l-5-4v-9z" fill="#6d97c4" stroke="#3f5d80"/><path d="M2 2h28v5H2z" fill="#fce94f" stroke="#8c7a12"/></symbol>
    <symbol id="epsf" viewBox="0 0 32 32"><path d="M15 5Q13 1 8 2 3 3 4 7t6 3q-8 0-7 6t7 3q4 0 5-4" fill="none" stroke="#5c3566" stroke-width="2.400"/><path d="M16 18h14l-4 5v6h-6v-6z" fill="#ddd" stroke="#777" stroke-width="1.500"/></symbol>
    <symbol id="expand" viewBox="0 0 32 32"><path d="M2 5h20M7 5v21h8M7 14h8" fill="none" stroke="#777" stroke-width="1.500"/><path d="M9 11h5v5H9zM9 22h5v5H9z" fill="#f39c2b"/><path d="M19 4h7v14h5l-8 10-8-10h4z" fill="#5f8dbd" stroke="#3c5a7c"/></symbol>
    <symbol id="collapse" viewBox="0 0 32 32"><path d="M2 5h20M7 5v21h8M7 14h8" fill="none" stroke="#777" stroke-width="1.500"/><path d="M9 11h5v5H9zM9 22h5v5H9z" fill="#f39c2b"/><path d="M19 28h7V13h5L23 3l-8 10h4z" fill="#5f8dbd" stroke="#3c5a7c"/></symbol>
    <symbol id="remove" viewBox="0 0 32 32"><path d="M4 5h22v21H4z" fill="#eee" stroke="#888" stroke-width="2"/><rect x="18" y="21" width="13" height="9" rx="2" fill="#e05252"/><path d="M20 25.500h9" stroke="#fff" stroke-width="2"/></symbol>

    <!-- attribute table -->
    <symbol id="allrows" viewBox="0 0 32 32"><path d="M2 3h28v6H2zM2 13h28v6H2zM2 23h28v6H2z" fill="#fce94f" stroke="#c4a000" stroke-width="1.500"/></symbol>
    <symbol id="invert" viewBox="0 0 32 32"><path d="M3 3h26v26z" fill="#ddd" stroke="#aaa"/><path d="M3 3v26h26z" fill="#fce94f" stroke="#c4a000"/></symbol>
    <symbol id="totop" viewBox="0 0 32 32"><path d="M3 3h26v26H3z" fill="#d5e4f4" stroke="#7795b5"/><path d="M3 22h26v7H3z" fill="#fce94f" stroke="#c4a000"/><path d="M6 7h6M6 11h6M6 15h6M20 7h6M20 11h6M20 15h6M16 20V8m-4 4l4-5 4 5" fill="none" stroke="#3c5a7c" stroke-width="2"/></symbol>
    <symbol id="copyrows" viewBox="0 0 32 32"><path d="M12 2h17v22H12z" fill="#fbe98a" stroke="#bba040" stroke-width="1.500"/><path d="M4 7h17v23H4z" fill="#fff" stroke="#777" stroke-width="1.500"/><path d="M8 13h9M8 17h9M8 21h9M8 25h6" stroke="#777" stroke-width="1.500"/></symbol>
    <symbol id="pasterows" viewBox="0 0 32 32"><path d="M5 4h22v26H5z" fill="#e8b56b" stroke="#a97830" stroke-width="1.500"/><path d="M11 1h10v6H11z" fill="#999"/><path d="M9 10h14v17H9z" fill="#fff" stroke="#999"/><path d="M12 14h8M12 18h8M12 22h6" stroke="#777" stroke-width="1.500"/></symbol>
    <symbol id="newcol" viewBox="0 0 32 32"><path d="M3 3h24v24H3z" fill="#eee" stroke="#888" stroke-width="1.500"/><path d="M6 8h6M6 13h6M6 18h6M18 8h7M18 13h7" stroke="#888" stroke-width="1.500"/><path d="M12 3h6v24h-6z" fill="#bbb"/><use href="#b-star"/></symbol>
    <symbol id="delcol" viewBox="0 0 32 32"><path d="M3 3h24v24H3z" fill="#eef" stroke="#888" stroke-width="1.500"/><path d="M6 8h6M6 13h6M6 18h6M20 8h5M20 13h5" stroke="#88a" stroke-width="1.500"/><path d="M12 3h6v24h-6z" fill="#fce94f" stroke="#c4a000"/><path d="M19 19h12v12H19z" fill="#d55"/><path d="M22 22l6 6M28 22l-6 6" stroke="#fff" stroke-width="2"/></symbol>
    <symbol id="form" viewBox="0 0 32 32"><path d="M8 3v26M8 12h10M8 20h8" stroke="#888"/><path d="M5 0h14v7H5z" fill="#fc0" stroke="#222"/><path d="M15 9h14v7H15z" fill="#0b5" stroke="#222"/><path d="M5 17h14v7H5z" fill="#0ac" stroke="#222"/><path d="M15 25h14v7H15z" fill="#c00" stroke="#222"/></symbol>
    <symbol id="polyb" viewBox="0 0 32 32"><path d="M6 9q2-7 12-5l12 2v22q-8 3-18 0Q2 26 6 9z" fill="#a9cbee" stroke="#567" stroke-width="2"/></symbol>
    <symbol id="wheel" viewBox="0 0 32 32"><circle cx="16" cy="16" r="13" fill="#aaa" stroke="#666" stroke-width="2"/><path d="M16 2v28M2 16h28M16 2q-14 14 0 28 14-14 0-28M6 8h20M6 24h20" fill="none" stroke="#666" stroke-width="1.500"/></symbol>
    <symbol id="chat" viewBox="0 0 32 32"><path d="M16 2q14 0 14 12 0 8-6 10v6l-6-5Q2 27 2 14 2 2 16 2z" fill="#4a5158"/><circle cx="9" cy="13" r="2" fill="#fff"/><circle cx="16" cy="13" r="2" fill="#fff"/><circle cx="23" cy="13" r="2" fill="#fff"/></symbol>
    <symbol id="mouse" viewBox="0 0 32 32"><ellipse cx="13" cy="13" rx="6" ry="10" fill="#ccc" stroke="#111" stroke-width="2.500"/><path d="M7 12h12M13 3v9" stroke="#111" stroke-width="2"/><circle cx="21" cy="23" r="6" fill="none" stroke="#111" stroke-width="2.500"/><path d="M5 22l20-12M12 26l14-6" stroke="#111" stroke-width="1.500"/></symbol>
    <symbol id="up" viewBox="0 0 8 8"><path d="M0 6.500L4 2l4 4.500z"/></symbol>
    <symbol id="down" viewBox="0 0 8 8"><path d="M0 2h8L4 6.500z"/></symbol>
    <symbol id="left" viewBox="0 0 8 8"><path d="M6 0v8L2 4z"/></symbol>
    <symbol id="right" viewBox="0 0 8 8"><path d="M2 0v8l4-4z"/></symbol>
  </svg>

  <header class="titlebar">
    <svg class="i22"><use href="#logo"/></svg>
    <h1>QGIS 2.14.2-Essen - articolo</h1>
    <div class="win-buttons">
      <button title="Riduci"><svg viewBox="0 0 16 16"><path d="M0 7.500h16"/></svg></button>
      <button title="Ripristina"><svg viewBox="0 0 16 16"><path d="M.5 3.500h11v12H.5zM3.500 3V.5h12v12H12"/></svg></button>
      <button title="Chiudi"><svg viewBox="0 0 16 16"><path d="M.5.5l15 15M15.500.5l-15 15"/></svg></button>
    </div>
  </header>

  <nav class="menubar">
    <a href="#">Progetto</a><a href="#">Modifica</a><a href="#">Visualizza</a><a href="#">Layer</a><a href="#">Impostazioni</a><a href="#">Plugins</a><a href="#">Vettore</a><a href="#">Raster</a><a href="#">Database</a><a href="#">Web</a><a href="#">CADDigitize</a><a href="#">MMQGIS</a><a href="#">Processing</a><a href="#">Guida</a>
  </nav>

  <!-- | grip, v drop-down, » overflow, / separator, _ gap, ~ disabled, ! pressed -->
  <div class="toolbar" data-tools="| new open save saveas compnew comp | !hand pan zin zout ~z11 zfull zsel zlay ~zlast ~znext refresh | info ~gear ~v select v eps v desel table abacus sigma ruler v bubble bmnew bmark tnote v | book . | chip | rpen1 rpen2 palette eraser rx rnote rdoc"></div>
  <div class="toolbar" data-tools="| ~pencils pencil ~savep ~addpoly ~addcurve ~v ~movef ~node trash cut ~copy ~paste | tri ~magnet ~undo ~redo ~movef ~simpl ~ring ~part ~fillring ~ringdel ~ringdel ~reshape ~offset ~split _ » | python nodes calc bino street profile leaf fox info wkt"></div>
  <div class="toolbar" data-tools="| sh1 ~v / sh2 ~v / sh3 ~v / sh4 ~v / sh5 ~v / sh6 ~v | | globe help bcheck bpen ~undo ~redo c1 c2 arc v circ v boxpen pent polypen stamp cs ca delx rot2 mov2 scale copy2 par perp grid mirror trap seg - » | dim » | combo » | docs »"></div>

  <main class="workspace">
    <div class="side-tools" data-tools="= vec raster pg feather sail db1 db2 wms wcs wfs comma virt newvec+ gps green gl2+ = cross compass »"></div>

    <section class="dock">
      <div class="dock-title">
        <span class="hgrip"></span>Layers Panel<span class="hgrip"></span>
        <button title="Sgancia"><svg viewBox="0 0 12 12"><path d="M1.500 4.500h6v6h-6zM4 4V1.500h6.500v6H8"/></svg></button>
        <button title="Chiudi pannello"><svg viewBox="0 0 12 12"><path d="M2 2l8 8M10 2l-8 8"/></svg></button>
      </div>
      <div class="dock-tools" data-tools="grp eye filter epsf v expand collapse remove"></div>
      <ul class="layer-tree">
        <li><i class="dots"></i><input type="checkbox" aria-label="contorno"><span class="sym-box"></span></li>
        <li><i class="dots"></i><input type="checkbox" checked aria-label="griglia"><span class="sym-green"></span></li>
        <li><i class="dots"></i><svg class="i20 gray"><use href="#table"/></svg><b>ta</b></li>
        <li class="current"><i class="plus"></i><input type="checkbox" checked aria-label="inter_esa_clc"><svg class="i20"><use href="#polyb"/></svg></li>
        <li><i class="plus"></i><input type="checkbox" aria-label="clc"><svg class="i20 gray"><use href="#polyb"/></svg></li>
      </ul>
      <div class="dock-tabs">
        <button>Browser Panel</button><button class="active">Layers Panel</button>
      </div>
    </section>

    <section class="map">
      <svg id="map" viewBox="421 209 1497 831" preserveAspectRatio="xMinYMin slice">
        <g id="cells"></g>
        <g transform="translate(420 200) scale(.5102 .3333)">
          <path fill="#bcea3f" d="M780 275L800 230 840 195 890 158 930 150 985 110 1050 100 1100 95 1150 88 1180 95 1240 100 1290 155 1325 180 1360 225 1385 235 1400 275z"/>
          <path fill="#788eb0" d="M1235 255L1270 230 1315 225 1330 200 1325 172 1355 195 1360 225 1340 255zM1198 90L1240 95 1295 155 1290 162 1240 105z"/>
        </g>
        <g transform="translate(1180 200) scale(.4719 .3333)">
          <path fill="#bcea3f" d="M0 310L40 305 95 288 120 318 140 330 150 318 190 310 208 305 213 275 308 203 345 165 375 107 450 117 535 203 560 192 612 197 645 220 660 200 708 176 725 198 708 230 695 232 697 258 740 238 790 235 835 215 865 200 855 215 865 225 840 240 885 268 930 242 990 240 1000 228 1025 230 1040 250 1085 275 1110 285 1120 308 1135 280 1160 325 1150 343 1180 380 1195 430 1212 470 1212 505 1190 545 1150 610 1120 620 1080 650 1040 690 1015 735 995 775 1035 770 1080 790 1060 800 1067 870 1075 930 1085 990 1060 1000 1030 1015 995 1030 940 1010 850 1020 795 1040 765 1020 700 1022 655 1030 600 1080 565 1115 530 1155 550 1200 562 1245 560 1280 575 1305 610 1340 645 1380 640 1400 600 1480 0 1480z"/>
          <path fill="#7fdb6e" d="M460 850L485 850 545 872 545 885 515 890 555 900 560 930 602 975 580 1035 560 1000 535 975 490 970 460 997 432 997 418 940 455 935 470 885zM583 820L598 805 630 815 632 850 648 870 625 895 642 945 615 945 610 880 585 855zM460 1315L500 1283 545 1320 580 1368 455 1365zM935 750L960 780 1010 795 1045 785 1065 805 1062 850 1045 850 1030 820 970 830 975 870 955 885 915 870 912 855 950 810 935 780z"/>
          <path fill="#5fd475" d="M965 660L985 635 1020 618 1040 625 1085 612 1095 622 1060 650 1030 695 1025 680 975 672zM1157 560L1170 535 1190 530 1180 575 1160 577zM1102 585L1135 585 1148 600 1135 615 1105 605z"/>
          <path fill="#788eb0" d="M190 577L215 574 262 580 318 540 340 555 338 578 315 585 280 600 310 630 345 638 360 660 385 655 405 640 430 643 450 680 487 697 480 710 430 712 412 672 370 665 320 700 325 715 290 705 290 735 325 745 352 770 343 795 325 780 285 775 273 740 277 690 290 660 265 625 205 612zM735 530L760 505 800 510 893 500 890 525 870 550 895 548 915 570 905 600 880 600 880 650 905 648 915 700 937 745 932 757 910 710 870 700 842 685 842 625 855 580 797 575 810 525 765 525 735 550zM680 605L705 610 728 680 770 685 812 720 850 775 843 800 780 805 763 850 760 925 743 925 755 830 730 800 727 760 720 710 735 690 710 670 705 640zM40 1120L110 1122 140 1140 158 1195 190 1245 185 1258 160 1255 145 1215 135 1210 120 1240 115 1262 40 1262z"/>
          <path fill="#ac8a6a" d="M640 515L690 518 700 505 718 510 718 540 750 570 730 605 680 590 680 610 695 620 675 630 672 668 645 670 645 700 662 720 655 735 632 730 637 670 630 630 655 580 665 560 640 535zM40 1265L115 1262 120 1235 140 1208 155 1250 190 1258 190 1245 175 1190 200 1157 220 1158 215 1245 235 1265 315 1268 400 1235 465 1195 490 1160 530 1145 530 1110 570 1050 615 1040 620 1008 640 1005 655 1035 635 1048 610 1055 575 1085 530 1160 500 1165 470 1210 400 1255 275 1305 130 1275 40 1295z"/>
          <path fill="#a9a04f" d="M870 915L885 892 930 880 970 890 1000 930 1080 975 1075 985 1045 1003 1020 950 920 955 895 995 885 960 872 940z"/>
          <path fill="#997fa6" d="M655 955L717 953 738 1015 720 1025 665 1022 690 1000 680 975zM613 955L630 957 625 973 607 973zM895 1005L935 1018 940 1048 890 1030zM565 1325L575 1300 608 1332 605 1340zM583 1368L647 1385 590 1390zM575 1085L655 1045 640 1055 575 1100z"/>
        </g>
        <g id="outlines"></g>
        <g id="labels"></g>
      </svg>
    </section>
  </main>

  <footer class="statusbar">
    <span class="status-msg">117 elementi selezionati dal layer inter_esa_clc.</span>
    <label for="coord">Coordinata</label><input id="coord" type="text" value="10.1426,43.9441">
    <button class="mouse-btn" title="Estensione"><svg class="i20"><use href="#mouse"/></svg></button>
    <label for="scale-sel">Scala</label>
    <select id="scale-sel"><option>1:40.084</option></select>
    <label for="rot">Rotazione</label>
    <span class="spin"><input id="rot" type="text" value="0,0"><span><button title="Su"><svg><use href="#up"/></svg></button><button title="Giù"><svg><use href="#down"/></svg></button></span></span>
    <input type="checkbox" id="render" checked><label for="render">Visualizza</label>
    <button class="flat epsg"><svg class="i20"><use href="#wheel"/></svg>EPSG:4326</button>
    <button class="flat chat" title="Messaggi"><svg class="i22"><use href="#chat"/></svg></button>
  </footer>
  <div class="taskbar"></div>

  <!-- attribute table window -->
  <section class="window attr">
    <div class="win-title"><h2>Tabella degli attributi - inter_esa_clc :: Totale degli elementi: 251, filtrati: 251, selezionati: 117</h2><button class="ghost-x">x</button></div>
    <div class="small-tools" data-tools="pencil ~savep refresh / ~newcol ~trash / eps allrows invert desel totop pan zsel copyrows pasterows / delcol ~newcol abacus . form"><button class="tool">?</button></div>
    <div class="grid-wrap">
      <table>
        <colgroup><col class="w-n"><col><col><col><col><col class="w-l"><col><col class="w-a"><col><col></colgroup>
        <thead><tr><th></th><th>id_esa</th><th>id</th><th>livello1</th><th>livello2</th><th>livello3</th><th>id_clc</th><th>area_mq</th><th>jj_max_area</th><th>jj_conteggio</th></tr></thead>
        <tbody id="rows"></tbody>
      </table>
      <div class="vbar"><button title="Su"><svg><use href="#up"/></svg></button><span class="thumb short"></span></div>
    </div>
    <div class="attr-foot"><button class="btn"><svg class="i24"><use href="#filter"/></svg>Mostra tutti gli elementi<svg class="mini"><use href="#down"/></svg></button></div>
  </section>

  <!-- expression dialog -->
  <section class="window expr">
    <div class="win-title">
      <svg class="i22"><use href="#logo"/></svg><h2>Select by expression - inter_esa_clc</h2>
      <button class="q">?</button><button title="Chiudi"><svg viewBox="0 0 16 16"><path d="M.5.5l15 15M15.500.5l-15 15"/></svg></button>
    </div>
    <div class="tabs"><button class="active">Espressione</button><button>Editor delle funzioni</button></div>
    <div class="expr-body">
      <div class="expr-left">
        <div class="ops"><button class="first">=</button><button>+</button><button>-</button><button>/</button><button>*</button><button>^</button><button>||</button><button>(</button><button>)</button><button>'\n'</button></div>
        <div class="editor">
          <div class="line" contenteditable="true" role="textbox" aria-label="Espressione"><b>CASE WHEN</b> <i>"area_mq"</i> <em>=</em> <i>"jj_max_area"</i> <b>THEN</b> <i>"id_esa"</i> <b>END</b><span class="caret"></span></div>
          <div class="hbar"><button title="Sinistra"><svg><use href="#left"/></svg></button><span class="thumb"></span><span class="track"></span><button title="Sinistra"><svg><use href="#left"/></svg></button><button title="Destra"><svg><use href="#right"/></svg></button></div>
        </div>
        <p class="preview"><span>Anteprima:</span><span>1</span></p>
      </div>
      <div class="expr-mid">
        <input type="text" placeholder="Cerca" aria-label="Cerca">
        <div class="func-tree">
          <ul><li><i class="plus"></i>Campi e valori</li><li><i class="plus"></i>Colore</li><li><i class="plus"></i>Condizioni</li><li><i class="plus"></i>Conversioni</li><li><i class="plus"></i>Custom</li><li><i class="plus"></i>Data e ora</li><li><i class="plus"></i>Fuzzy Matching</li><li><i class="plus"></i>Generale</li></ul>
          <div class="vbar"><button title="Su"><svg><use href="#up"/></svg></button><span class="thumb short"></span><span class="track"></span><button title="Su"><svg><use href="#up"/></svg></button><button title="Giù"><svg><use href="#down"/></svg></button></div>
        </div>
      </div>
      <div class="help-box">
        <p>CASE WHEN "area_mq" = "jj_max_area" THEN "id_esa" END</p>
        <div class="vbar"><button title="Su"><svg><use href="#up"/></svg></button><span class="thumb tall"></span><button title="Su"><svg><use href="#up"/></svg></button><button title="Giù"><svg><use href="#down"/></svg></button></div>
      </div>
    </div>
    <div class="expr-foot">
      <button class="btn sel"><svg class="i22"><use href="#eps"/></svg>Seleziona</button><button class="btn arrow" title="Altro"><svg class="mini"><use href="#down"/></svg></button><button class="btn close">Chiudi</button>
    </div>
  </section>

  <!-- step markers -->
  <svg class="arrows" aria-hidden="true">
    <g stroke="#ed1c24" stroke-width="5" fill="none"><path d="M953 153L781 660"/><path d="M1186 534C1370 540 1544 760 1552 967"/></g>
    <g fill="#ed1c24"><circle cx="953" cy="153" r="8"/><circle cx="1552" cy="967" r="8"/><path d="M771 686l1-35 9 8 11-2zM1164 533l31-8-7 10 7 8z"/></g>
  </svg>
  <span class="step s1">1</span><span class="step s2">2</span><span class="step s3">3</span><span class="step s4">4</span>

  <script src="script.js"></script>
</body>
</html>
```
FILE: script.js
```js
const use = (name, cls) => `<svg class="${cls || 'ic'}"><use href="#${name}"/></svg>`;

function toolItem(t) {
  if (t === '|') return '<span class="grip"></span>';
  if (t === '=') return '<span class="hgrip"></span>';
  if (t === '/') return '<span class="sep"></span>';
  if (t === '_') return '<span class="gap wide"></span>';
  if (t === '-') return '<span class="gap"></span>';
  if (t === '.') return '<span class="gap mid"></span>';
  if (t === '»') return '<button class="more">»</button>';
  if (t === 'combo') return '<span class="clear-combo"><svg viewBox="0 0 24 12"><path d="M0 6l5-6h19v12H5z"/><path d="M10 3l6 6M16 3l-6 6" stroke="#fff" stroke-width="2"/></svg><button title="Apri">' + use('down', 'mini') + '</button></span>';
  let cls = '';
  if (t[0] === '~') { cls = ' off'; t = t.slice(1); }
  if (t[0] === '!') { cls = ' on'; t = t.slice(1); }
  if (t === 'v') return `<button class="drop${cls}" title="Menu">${use('down', 'mini')}</button>`;
  if (t.endsWith('+')) {
    t = t.slice(0, -1);
    cls += ' split';
    return `<button class="tool${cls}" title="${t}">${use(t)}${t === 'newvec' ? use('down', 'mini') : ''}</button>`;
  }
  return `<button class="tool${cls}" title="${t}">${use(t)}</button>`;
}

document.querySelectorAll('[data-tools]').forEach(bar => {
  bar.insertAdjacentHTML('afterbegin', bar.dataset.tools.split(' ').map(toolItem).join(''));
});

// attribute rows: id_esa, id, livello2, livello3, id_clc, area, max, count, selected
const B = 'Boschi di latifoglie', P = 'Aree a pascolo nat...', V = 'Aree a vegetazione...';
const data = [
  [1, 'IT-30422', 'bosc', B, 1, '11972.15', '11972.15', 2, 1],
  [1, 'IT-42338', 'cara', P, 3, '2501.30', '11972.15', 2, 0],
  [2, 'IT-30422', 'bosc', B, 1, '36200.30', '36200.3', 1, 1],
  [3, 'IT-30422', 'bosc', B, 1, '16103.73', '172864.4', 3, 0],
  [3, 'IT-42338', 'cara', P, 3, '172864.40', '172864.4', 3, 1],
  [3, 'IT-42563', 'cara', V, 9, '15133.73', '172864.4', 3, 0],
  [4, 'IT-30422', 'bosc', B, 1, '777211.85', '777211.85', 3, 1],
  [4, 'IT-42338', 'cara', P, 3, '76301.56', '777211.85', 3, 0],
  [4, 'IT-42563', 'cara', V, 9, '19476.72', '777211.85', 3, 0],
  [5, 'IT-30422', 'bosc', B, 1, '', '', '', 1],
  [5, 'IT-42338', 'cara', P, 3, '', '', '', 0],
  [6, 'IT-30422', 'bosc', B, 1, '', '', '', 1],
  [7, 'IT-30422', 'bosc', B, 1, '', '', '', 1],
  [8, 'IT-30422', 'bosc', B, 1, '', '', '', 1],
  [8, 'IT-42338', 'cara', P, 3, '', '', '', 0],
  [9, 'IT-30422', 'bosc', B, 1, '', '', '', 1],
  ['', '', '', '', '', '', '', '', 0]
];
document.getElementById('rows').innerHTML = data.map((r, n) =>
  `<tr class="${r[8] ? 'sel' : ''}"><th>${n < 16 ? n : ''}</th><td class="num">${r[0]}</td><td>${r[1]}</td>` +
  `<td class="txt">${r[1] && 'Territori b...'}</td><td class="txt">${r[2] && 'Zone ' + r[2] + '...'}</td><td class="txt">${r[3]}</td>` +
  `<td class="num">${r[4]}</td><td class="num">${r[5]}</td><td>${r[6]}</td><td>${r[7]}</td></tr>`).join('');

// hexagon grid: column x, first centre y, labels going down
const cols = [
  [630, 310, ['']], [702, 268, ['11']], [774, 310, ['']], [846, 268, ['23']],
  [918, 227, ['30', '']], [990, 268, ['37']], [1062, 227, ['47', '']], [1134, 268, ['57']],
  [1206, 310, ['66', '65', '64', '63', '62']],
  [1278, 268, ['76', '75', '74', '73', '72', '']],
  [1350, 227, ['86', '85', '84', '83', '82', '81']],
  [1422, 268, ['96', '95', '94', '93', '92', '']],
  [1494, 227, ['104', '103', '102', '101', '100', '99']],
  [1566, 268, ['108', '107', '106', '105']],
  [1638, 310, ['112', '111', '110', '109']],
  [1710, 268, ['116', '115', '114', '113']],
  [1782, 393, ['117']],
  [1134, 1015, ['']], [1278, 1015, ['']], [1422, 1015, ['']]
];
let cells = '', labels = '';
cols.forEach(([x, y0, names]) => names.forEach((name, k) => {
  const y = y0 + k * 83;
  cells += `<polygon points="${x - 48},${y} ${x - 24},${y - 41.5} ${x + 24},${y - 41.5} ${x + 48},${y} ${x + 24},${y + 41.5} ${x - 24},${y + 41.5}"/>`;
  // cells cut by the top edge carry their label lower
  if (name) labels += `<text x="${x}" y="${(y === 227 ? 236 : y) + 6}">${name}</text>`;
}));
document.getElementById('cells').innerHTML = cells;
document.getElementById('outlines').innerHTML = cells;
document.getElementById('labels').innerHTML = labels;
```
FILE: styles.css
```css
:root {
  --face: #efefef;
  --line: #b4b4b4;
  --ui: Lato, "Open Sans", sans-serif;
  --title: "Open Sans", "Noto Sans", sans-serif;
}
* {
  margin: 0;
  padding: 0;
  box-sizing: border-box;
}
body {
  position: relative;
  height: 100vh;
  overflow: hidden;
  display: flex;
  flex-direction: column;
  background: var(--face);
  color: #000;
  font-family: var(--ui);
  font-size: 17px;
  line-height: 20px;
}
button, input, select {
  font: inherit;
  color: inherit;
}
button {
  border: none;
  background: none;
}
a {
  color: inherit;
  text-decoration: none;
}
ul {
  list-style: none;
}
h1, h2 {
  font-family: var(--title);
  font-size: 17px;
  font-weight: 400;
}
.defs { display: none; }
.ic { width: 32px; height: 32px; display: block; flex: none; }
.i20 { width: 20px; height: 20px; flex: none; }
.i22 { width: 22px; height: 22px; flex: none; }
.i24 { width: 24px; height: 24px; flex: none; }
.mini { width: 12px; height: 12px; flex: none; }
.gray { filter: grayscale(1); }
.ic-b, .ic-i, .ic-t, .ic-w {
  text-anchor: middle;
  font-family: "Liberation Sans", sans-serif;
  font-weight: 700;
}
.ic-i { font-family: "Liberation Serif", serif; font-style: italic; fill: #fff; }
.ic-t { font-family: "Liberation Serif", serif; fill: #555; }
.ic-w { fill: #fff; }

/* title and menu */
.titlebar {
  height: 35px;
  flex: none;
  display: flex;
  align-items: center;
  gap: 5px;
  padding-left: 4px;
  background: #fff;
  color: #999;
}
.win-buttons {
  margin-left: auto;
  display: flex;
}
.win-buttons button {
  width: 70px;
  height: 35px;
}
.win-buttons svg {
  width: 16px;
  height: 16px;
  fill: none;
  stroke: #888;
}
.menubar {
  height: 30px;
  flex: none;
  display: flex;
  align-items: center;
  gap: 14px;
  padding-left: 10px;
}

/* toolbars */
.toolbar {
  height: 47px;
  flex: none;
  display: flex;
  align-items: center;
  border-top: 1px solid var(--line);
  box-shadow: inset 0 1px #fff;
}
.tool {
  width: 43px;
  height: 40px;
  flex: none;
  display: flex;
  align-items: center;
  justify-content: center;
}
.tool.on {
  background: linear-gradient(#d0d0d0, #dcdcdc);
  border: 1px solid #888;
  border-radius: 3px;
}
.tool.off .ic {
  filter: grayscale(1);
  opacity: .8;
}
.drop {
  width: 18px;
  height: 40px;
  flex: none;
  display: flex;
  align-items: center;
  justify-content: center;
}
.drop.off svg { fill: #999; }
.grip {
  width: 14px;
  height: 36px;
  flex: none;
  background: radial-gradient(circle at 1px 1px, #c4c4c4 1px, transparent 1px) 8px 0 / 3px 4px repeat-y;
}
.toolbar > .grip:first-child {
  width: 11px;
  background-position-x: 6px;
}
.sep {
  width: 3px;
  height: 38px;
  flex: none;
  border-left: 1px solid #aaa;
}
.gap { width: 7px; flex: none; }
.gap.wide { width: 39px; }
.gap.mid { width: 21px; }
.more {
  width: 20px;
  flex: none;
  font-size: 18px;
}
.clear-combo {
  width: 86px;
  height: 28px;
  flex: none;
  display: flex;
  align-items: center;
  justify-content: flex-end;
  background: #fff;
  border: 1px solid #aaa;
  border-radius: 3px;
}
.clear-combo > svg { width: 24px; height: 12px; margin-right: 14px; }
.clear-combo button {
  width: 16px;
  height: 26px;
  border-left: 1px solid #aaa;
  background: #f2f2f2;
  display: flex;
  align-items: center;
  justify-content: center;
}
.clear-combo .mini { width: 8px; height: 8px; }

/* workspace */
.workspace {
  flex: 1;
  min-height: 0;
  display: flex;
  border-top: 1px solid var(--line);
}
.side-tools {
  width: 67px;
  flex: none;
  padding-top: 2px;
  border-right: 1px solid var(--line);
  display: flex;
  flex-direction: column;
  align-items: center;
}
.side-tools .tool {
  height: 42px;
  width: 48px;
}
.side-tools .split {
  width: 66px;
  gap: 6px;
  justify-content: flex-start;
  padding-left: 8px;
}
.side-tools .more {
  margin: auto 26px 0 0;
  writing-mode: vertical-rl;
}
.hgrip {
  height: 6px;
  background: radial-gradient(circle at 1px 1px, #cfcfcf 1px, transparent 1px) 0 0 / 4px 3px;
}
.side-tools .hgrip {
  width: 60px;
  flex: none;
  margin: 3px 0 0;
}
.side-tools .tool + .hgrip { margin: 5px 0; }
.dock {
  width: 348px;
  flex: none;
  display: flex;
  flex-direction: column;
}
.dock-title {
  height: 24px;
  flex: none;
  display: flex;
  align-items: center;
  gap: 4px;
  padding: 0 2px;
  font-size: 15px;
}
.dock-title .hgrip { flex: 1; margin: 0 6px; }
.dock-title button {
  width: 15px;
  height: 15px;
  border: 1px solid #666;
  border-radius: 2px;
  background: #fafafa;
  display: flex;
}
.dock-title svg { width: 13px; height: 13px; fill: none; stroke: #000; stroke-width: 1.5px; }
.dock-tools {
  height: 47px;
  flex: none;
  display: flex;
  align-items: center;
  padding-left: 2px;
}
.dock-tools .tool { width: 35px; }
.dock-tools .drop { width: 16px; }
.dock-tools .ic { width: 24px; height: 24px; }
.layer-tree {
  flex: 1;
  background: #fff;
  border: 1px solid var(--line);
}
.layer-tree li {
  height: 23px;
  display: flex;
  align-items: center;
  gap: 5px;
  padding-left: 4px;
}
.layer-tree .current { background: #efefef; }
.dots {
  width: 14px;
  flex: none;
  border-top: 1px dotted #888;
}
.plus {
  width: 9px;
  height: 9px;
  flex: none;
  border: 1px solid #888;
  background:
    linear-gradient(#444, #444) center / 5px 1px no-repeat,
    linear-gradient(#444, #444) center / 1px 5px no-repeat;
}
.layer-tree .plus { margin-right: 5px; }
input[type="checkbox"] {
  appearance: none;
  width: 18px;
  height: 18px;
  flex: none;
  border: 1px solid #bbb;
  background: #fff;
}
input[type="checkbox"]:checked {
  background:
    linear-gradient(45deg, transparent 42%, #000 42%, #000 58%, transparent 58%) center / 13px 13px no-repeat,
    linear-gradient(-45deg, transparent 42%, #000 42%, #000 58%, transparent 58%) center / 13px 13px no-repeat,
    #fff;
}
.sym-box { width: 20px; height: 18px; border: 2px solid #000; }
.sym-green { width: 20px; height: 18px; background: #bdebba; }
.dock-tabs {
  display: flex;
  height: 30px;
  flex: none;
  padding: 1px 0 0 1px;
}
.dock-tabs button {
  width: 141px;
  height: 26px;
  border: 1px solid var(--line);
  background: linear-gradient(#f2f2f2, #dedede);
}
.dock-tabs .active {
  width: 126px;
  height: 29px;
  border-top: none;
  background: var(--face);
  border-radius: 0 0 3px 3px;
}
.map {
  flex: 1;
  min-width: 0;
  margin: 1px 1px 0 5px;
  border: 1px solid var(--line);
  background: #fff;
}
.map svg { display: block; width: 100%; height: 100%; }
#cells { fill: #bdebba; }
#outlines { fill: none; stroke: #fff; stroke-opacity: .6; stroke-width: 1.5px; }
#labels { font: 17px "Noto Sans", sans-serif; text-anchor: middle; }

/* status bar */
.statusbar {
  height: 37px;
  flex: none;
  display: flex;
  align-items: center;
  padding: 0 20px 0 6px;
}
.status-msg { flex: 1; }
.statusbar input[type="text"], .statusbar select {
  height: 28px;
  border: 1px solid #b0b0b0;
  border-radius: 2px;
  background: #fff;
  font-size: 16px;
}
#coord { width: 253px; margin-left: 5px; text-align: center; }
.mouse-btn {
  width: 20px;
  height: 32px;
  margin-right: 9px;
  border: 1px solid #888;
  border-radius: 3px;
  background: #f4f4f4;
  display: flex;
  align-items: center;
  justify-content: center;
}
.mouse-btn svg { width: 17px; }
.statusbar #scale-sel {
  width: 115px;
  margin: 0 10px;
  padding-left: 4px;
  appearance: none;
  background:
    linear-gradient(45deg, transparent 50%, #000 50%) right 8px center / 4px 4px no-repeat,
    linear-gradient(-45deg, transparent 50%, #000 50%) right 4px center / 4px 4px no-repeat,
    linear-gradient(90deg, #fff 98px, #aaa 98px, #aaa 99px, #f2f2f2 99px);
  background:
    conic-gradient(from -45deg at 50% 100%, #000 90deg, transparent 90deg) right 4px center / 8px 4px no-repeat,
    linear-gradient(90deg, #fff 98px, #aaa 98px, #aaa 99px, #f2f2f2 99px);
  background:
    conic-gradient(from 135deg at 50% 100%, transparent 0),
    linear-gradient(to bottom left, transparent 50%, #000 50%) right 8px center / 4px 4px no-repeat,
    linear-gradient(90deg, #fff 98px, #aaa 98px, #aaa 99px, #f2f2f2 99px);
  background:
    linear-gradient(to top right, transparent 50%, #000 50%) right 8px center / 4px 4px no-repeat,
    linear-gradient(to top left, transparent 50%, #000 50%) right 4px center / 4px 4px no-repeat,
    linear-gradient(90deg, #fff 98px, #aaa 98px, #aaa 99px, #f2f2f2 99px);
}
.spin { display: flex; margin: 0 7px 0 10px; }
.spin input[type="text"] { width: 103px; height: 32px; padding-left: 3px; }
.spin > span { display: flex; flex-direction: column; }
.spin button {
  width: 16px;
  height: 16px;
  border: 1px solid #bbb;
  display: flex;
  align-items: center;
  justify-content: center;
}
.spin svg, .vbar svg, .hbar svg { width: 8px; height: 8px; }
#render { margin-right: 9px; }
.flat { display: flex; align-items: center; gap: 5px; font-size: 16px; }
.epsg { margin-left: 18px; }
.chat { margin-left: 26px; }
.taskbar { height: 2px; flex: none; background: #222; }

/* floating windows */
.window {
  position: absolute;
  display: flex;
  flex-direction: column;
  background: var(--face);
  box-shadow: 0 4px 16px rgba(0, 0, 0, .35);
}
.win-title {
  height: 44px;
  flex: none;
  display: flex;
  align-items: center;
  background: #fff;
}
.win-title svg { flex: none; }
.attr { left: 125px; top: 285px; width: 1078px; height: 644px; }
.attr .win-title { padding-left: 11px; color: #999; }
.attr h2 { flex: 1; white-space: nowrap; }
.win-title button { width: 70px; }
.win-title .ghost-x {
  width: 30px;
  height: 30px;
  margin-top: 6px;
  background: #e3e3e3;
  color: #fff;
}
.small-tools {
  height: 39px;
  flex: none;
  display: flex;
  align-items: center;
  padding-left: 1px;
}
.small-tools .tool { width: 31px; }
.small-tools .ic { width: 20px; height: 20px; }
.small-tools .sep { margin: 0 1px 0 2px; height: 32px; }
.small-tools .mid { flex: 1; }
.small-tools .tool:last-child { margin-left: 4px; }
.grid-wrap {
  flex: 1;
  min-height: 0;
  overflow: hidden;
  display: flex;
  justify-content: space-between;
  margin: 0 2px;
  background: #fff;
  border: 1px solid #aaa;
}
table {
  width: 1015px;
  height: max-content;
  table-layout: fixed;
  border-collapse: separate;
  border-spacing: 0;
  font-size: 16px;
}
col { width: 100px; }
.w-n { width: 38px; }
.w-l { width: 162px; }
.w-a { width: 115px; }
th {
  font-weight: 400;
  border: 1px solid #8c8c8c;
  border-left-color: #fff;
  border-top-color: #fff;
  background: linear-gradient(#fafafa, #e6e6e6);
}
thead th { height: 34px; border-top-color: #8c8c8c; font-size: 17px; }
tbody th {
  text-align: left;
  padding: 2px 0 0 5px;
  border-left-color: #8c8c8c;
  border-bottom-width: 2px;
}
td {
  height: 30px;
  padding: 0 3px 5px;
  overflow: hidden;
  white-space: nowrap;
  border-right: 1px solid #a0a0a0;
  border-bottom: 1px solid #a0a0a0;
}
tr:nth-child(even) td { background: #f5f5f5; }
tr.sel td { background: #3399ff; color: #fff; }
.txt { font-size: 17px; }
.num { text-align: right; }
.attr-foot {
  height: 40px;
  flex: none;
  padding: 4px 3px;
}
.btn {
  height: 33px;
  display: flex;
  align-items: center;
  justify-content: center;
  gap: 6px;
  border: 1px solid #888;
  border-radius: 3px;
  background: linear-gradient(#fafafa, #e2e2e2);
}
.attr-foot .btn { width: 222px; gap: 4px; white-space: nowrap; }
.attr-foot .mini { width: 9px; height: 9px; margin: 14px 0 0 -6px; }

/* scroll bars */
.vbar {
  width: 17px;
  flex: none;
  display: flex;
  flex-direction: column;
  background: #f3f3f3;
  border-left: 1px dotted #bbb;
}
.vbar button, .hbar button {
  width: 16px;
  height: 16px;
  flex: none;
  border: 1px solid #888;
  border-radius: 2px;
  background: #f7f7f7;
  display: flex;
  align-items: center;
  justify-content: center;
}
.thumb {
  border: 1px solid #888;
  border-radius: 2px;
  background: #f2f2f2;
}
.vbar .thumb { width: 16px; }
.short { height: 26px; }
.track { flex: 1; }
.tall { flex: 1; }

/* expression dialog */
.expr {
  left: 631px;
  top: 666px;
  width: 1136px;
  height: 353px;
  border: 1px solid #4f9fcc;
}
.expr .win-title { padding-left: 13px; }
.expr h2 { flex: 1; margin-left: 5px; }
.expr .win-title svg[viewBox] { width: 16px; height: 16px; fill: none; stroke: #000; }
.q { font: 18px var(--title); }
.tabs {
  height: 32px;
  flex: none;
  display: flex;
  align-items: flex-end;
  margin: 0 4px 0 3px;
  border-bottom: 1px solid var(--line);
}
.tabs button {
  width: 181px;
  height: 26px;
  border: 1px solid var(--line);
  background: linear-gradient(#f2f2f2, #dedede);
}
.tabs .active {
  width: 123px;
  height: 29px;
  margin-bottom: -1px;
  border-bottom: none;
  background: var(--face);
}
.expr-body {
  height: 208px;
  flex: none;
  display: flex;
  margin: 10px 12px 0 3px;
}
.expr-left { flex: 1; min-width: 0; }
.ops { display: flex; gap: 2px; font-size: 16px; }
.ops button {
  width: 28px;
  height: 35px;
  border: 1px solid #b0b0b0;
  border-radius: 2px;
  background: linear-gradient(#fafafa, #dedede);
  white-space: nowrap;
}
.ops .first { border-color: #666; }
.editor {
  height: 148px;
  margin-top: 6px;
  display: flex;
  flex-direction: column;
  border: 2px solid #4a96e8;
  border-radius: 2px;
  background: #fff;
}
.line {
  height: 25px;
  background: #fdf3ed;
  white-space: nowrap;
  outline: none;
  font: 20px/25px "Liberation Mono", monospace;
}
.line b, .line em {
  font: 700 20px/24px "Noto Sans", "Open Sans", sans-serif;
  color: #00007f;
}
.line em { color: #000; }
.line i { font-style: normal; color: #7f007f; }
.caret {
  display: inline-block;
  height: 25px;
  margin-left: 5px;
  border-left: 1px solid #000;
  vertical-align: top;
}
.hbar {
  height: 16px;
  margin-top: auto;
  display: flex;
  background: #f3f3f3;
  border-top: 1px dotted #bbb;
}
.hbar .thumb { width: 70px; }
.preview {
  display: flex;
  gap: 20px;
  margin-top: 7px;
}
.expr-mid {
  width: 184px;
  margin-left: 13px;
  display: flex;
  flex-direction: column;
  gap: 7px;
}
.expr-mid input {
  width: 100%;
  height: 33px;
  padding-left: 3px;
  border: 1px solid #b0b0b0;
  border-radius: 2px;
}
.expr-mid input::placeholder { color: #999; }
.func-tree {
  flex: 1;
  min-height: 0;
  display: flex;
  overflow: hidden;
  border: 1px solid #b0b0b0;
}
.func-tree ul {
  flex: 1;
  padding-top: 1px;
  background: linear-gradient(90deg, #fff 20px, #efefef 20px);
}
.func-tree li {
  height: 22px;
  display: flex;
  align-items: center;
  gap: 8px;
  padding-left: 6px;
  white-space: nowrap;
}
.help-box {
  width: 93px;
  margin-left: 7px;
  display: flex;
  border: 1px solid #b0b0b0;
  background: #fff;
}
.help-box p {
  flex: 1;
  min-width: 0;
  padding: 6px 0 0 5px;
  overflow-wrap: anywhere;
  font: 18px/22px "Liberation Sans", sans-serif;
}
.expr-foot {
  display: flex;
  justify-content: flex-end;
  gap: 2px;
  margin: 18px 13px 0 0;
}
.sel { width: 115px; }
.arrow { width: 17px; }
.close { width: 112px; margin-left: 9px; border-color: #b0b0b0; }

/* step markers */
.arrows {
  position: absolute;
  inset: 0;
  width: 100%;
  height: 100%;
  pointer-events: none;
}
.step {
  position: absolute;
  width: 39px;
  height: 39px;
  border-radius: 50%;
  background: #d9623f;
  color: #fff;
  font: 700 28px/39px "Liberation Sans", sans-serif;
  text-align: center;
}
.s1 { left: 943px; top: 103px; }
.s2 { left: 1001px; top: 825px; }
.s3 { left: 1460px; top: 973px; }
.s4 { left: 188px; top: 290px; }
```
